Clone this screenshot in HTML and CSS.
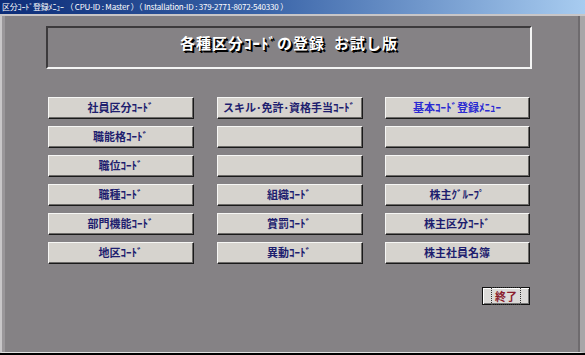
FILE: index.html
```html
<!DOCTYPE html>
<html lang="ja">
<head>
    <meta charset="UTF-8">
    <title>区分ｺｰﾄﾞ登録ﾒﾆｭｰ</title>
    <link rel="stylesheet" href="styles.css">
</head>
<body>
    <div class="window">
        <div class="titlebar">区分ｺｰﾄﾞ登録ﾒﾆｭｰ （ CPU-ID : Master ）（ Installation-ID : 379-2771-8072-540330 ）</div>
        <div class="client">
            <div class="banner">
                <span class="banner-text">各種区分ｺｰﾄﾞの登録&nbsp;&nbsp;お試し版</span>
            </div>

            <div class="menu-grid">
                <button class="menu-btn">社員区分ｺｰﾄﾞ</button>
                <button class="menu-btn">スキル･免許･資格手当ｺｰﾄﾞ</button>
                <button class="menu-btn accent">基本ｺｰﾄﾞ登録ﾒﾆｭｰ</button>

                <button class="menu-btn">職能格ｺｰﾄﾞ</button>
                <button class="menu-btn"></button>
                <button class="menu-btn"></button>

                <button class="menu-btn">職位ｺｰﾄﾞ</button>
                <button class="menu-btn"></button>
                <button class="menu-btn"></button>

                <button class="menu-btn">職種ｺｰﾄﾞ</button>
                <button class="menu-btn">組織ｺｰﾄﾞ</button>
                <button class="menu-btn">株主ｸﾞﾙｰﾌﾟ</button>

                <button class="menu-btn">部門機能ｺｰﾄﾞ</button>
                <button class="menu-btn">賞罰ｺｰﾄﾞ</button>
                <button class="menu-btn">株主区分ｺｰﾄﾞ</button>

                <button class="menu-btn">地区ｺｰﾄﾞ</button>
                <button class="menu-btn">異動ｺｰﾄﾞ</button>
                <button class="menu-btn">株主社員名簿</button>
            </div>

            <div class="footer">
                <button class="end-btn"><span class="focus">終了</span></button>
            </div>
        </div>
    </div>
</body>
</html>
```

FILE: styles.css
```css
body {
    margin: 0;
    background: #c8c6c8;
    font-family: "Noto Sans CJK JP", "Liberation Sans", sans-serif;
}

.window {
    width: 585px;
    height: 355px;
    display: flex;
    flex-direction: column;
    background: #000;
    overflow: hidden;
}

.titlebar {
    height: 14px;
    line-height: 14px;
    padding-left: 2px;
    font-size: 8px;
    letter-spacing: -0.2px;
    color: #fff;
    white-space: nowrap;
    background: linear-gradient(to right, #0c2c78 0%, #3a64a8 45%, #a8ccf0 100%);
    border-bottom: 2px solid #c8c6c8;
}

.client {
    flex: 1;
    margin-bottom: 2px;
    background: #858285;
    border-left: 2px solid #c8c6c8;
    box-shadow: inset 3px 0 0 #9a979a, inset -2px 0 0 #6e6b6e;
    border-right: 5px solid #a8a6a8;
    border-bottom: 1px solid #e4e4e4;
    padding: 10px 0 0 46px;
}

.banner {
    width: 486px;
    height: 43px;
    box-sizing: border-box;
    border-top: 2px solid #3c3a3c;
    border-left: 2px solid #3c3a3c;
    border-bottom: 2px solid #f4f4f4;
    border-right: 2px solid #f4f4f4;
    margin-left: -2px;
    display: flex;
    justify-content: center;
    padding-top: 4px;
}

.banner-text {
    font-size: 15px;
    font-weight: bold;
    color: #fff;
    text-shadow: 1px 1px 0 #000, 2px 2px 0 #000;
    letter-spacing: 1px;
    line-height: 22px;
}

.menu-grid {
    display: grid;
    grid-template-columns: 145px 145px 144px;
    grid-auto-rows: 21px;
    column-gap: 23.5px;
    row-gap: 8px;
    margin-top: 28px;
}

.menu-btn {
    box-sizing: border-box;
    margin: 0;
    padding: 0;
    background: #d6d3ce;
    border: none;
    box-shadow: inset 1px 1px 0 #f6f6f4, inset -1px -1px 0 #6c6a68, 1px 1px 0 #1a1a1a;
    font-family: "Noto Sans CJK JP", serif;
    font-size: 11px;
    font-weight: bold;
    color: #1e1e6e;
    line-height: 21px;
}

.menu-btn.accent {
    color: #2a2ad2;
}

.footer {
    display: flex;
    justify-content: flex-end;
    padding-right: 50px;
    margin-top: 24px;
}

.end-btn {
    width: 48px;
    height: 18px;
    box-sizing: border-box;
    margin: 0;
    padding: 0;
    background: #dcdad8;
    border: 1px solid #111;
    box-shadow: inset 1px 1px 0 #fff, inset -1px -1px 0 #777;
    font-family: "Noto Sans CJK JP", serif;
    font-size: 11px;
    font-weight: bold;
    color: #8a1c2c;
    line-height: 14px;
}

.focus {
    outline: 1px dotted #333;
    padding: 0 3px;
}
```
